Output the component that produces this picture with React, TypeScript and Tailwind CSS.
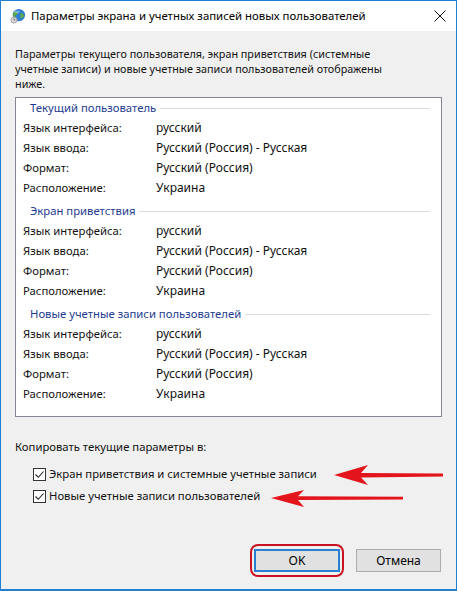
import React from "react";

type Row = { label: string; value: string };

const rows: Row[] = [
  { label: "Язык интерфейса:", value: "русский" },
  { label: "Язык ввода:", value: "Русский (Россия) - Русская" },
  { label: "Формат:", value: "Русский (Россия)" },
  { label: "Расположение:", value: "Украина" },
];

const groups = ["Текущий пользователь", "Экран приветствия", "Новые учетные записи пользователей"];

function GlobeIcon() {
  return (
    <svg width="16" height="16" viewBox="0 0 18 18" className="shrink-0">
      <circle cx="10" cy="8" r="7" fill="#2f7fd3" />
      <path d="M6 3.5c2 0 3 1.5 2.5 3s-2 1-2.5 2.5S5 11 4 10.5C3 8 3.5 5 6 3.5z" fill="#5fae3c" />
      <path d="M12 6c1.5-.5 3 .5 3.5 2s-1 3-2.5 3.5-1.5-1-1-2.5S10.5 6.5 12 6z" fill="#5fae3c" />
      <ellipse cx="8" cy="4.5" rx="3" ry="1.5" fill="#9fd0ff" opacity="0.6" />
      <circle cx="4.5" cy="13.5" r="3.5" fill="#d9d9d9" stroke="#8a8a8a" strokeWidth="0.8" />
      <path d="M4.5 11.5v2h1.5" stroke="#555" strokeWidth="0.8" fill="none" />
    </svg>
  );
}

function CheckBox() {
  return (
    <span className="w-[13px] h-[13px] border border-[#333333] bg-white flex items-center justify-center shrink-0">
      <svg width="11" height="11" viewBox="0 0 11 11">
        <path d="M1.5 5.5l2.8 2.8L9.5 2.5" stroke="#222" strokeWidth="1.1" fill="none" />
      </svg>
    </span>
  );
}

function Group({ title }: { title: string }) {
  return (
    <div className="mb-[3px]">
      <div className="h-[20px] flex items-center pl-[14px] pr-[11px]">
        <span className="text-[#1e3c8f] text-[11.3px] pr-[4px]">{title}</span>
        <span className="flex-1 h-px bg-[#d6dde3]" />
      </div>
      {rows.map((r) => (
        <div key={r.label} className="h-[20px] flex items-center pl-[7px]">
          <span className="w-[133px] text-[11.3px]">{r.label}</span>
          <span>{r.value}</span>
        </div>
      ))}
    </div>
  );
}

export default function App() {
  return (
    <div
      className="relative w-[457px] h-[591px] border border-[#1f7fd0] border-b-2 flex flex-col bg-[#f0f0f0] text-[12px] text-[#111] overflow-hidden"
      style={{ fontFamily: '"Noto Sans", "Open Sans", sans-serif' }}
    >
      {/* title bar */}
      <div className="h-[30px] bg-white flex items-center pl-[9px] pr-[9px] shrink-0">
        <GlobeIcon />
        <span className="ml-[5px] text-[11.4px] text-black">Параметры экрана и учетных записей новых пользователей</span>
        <svg width="12" height="12" viewBox="0 0 12 12" className="ml-auto mr-[1px]">
          <path d="M0.5 0.5l11 11M11.5 0.5l-11 11" stroke="#111" strokeWidth="1" />
        </svg>
      </div>

      <div className="flex-1 flex flex-col px-[14px] pt-[15px]">
        <p className="leading-[15px] text-[10.8px]">
          Параметры текущего пользователя, экран приветствия (системные
          <br />
          учетные записи) и новые учетные записи пользователей отображены
          <br />
          ниже.
        </p>

        <div className="mt-[6px] h-[320px] bg-white border border-[#828790]">
          {groups.map((g) => (
            <Group key={g} title={g} />
          ))}
        </div>

        <div className="mt-[22px] leading-[15px] text-[11.3px]">Копировать текущие параметры в:</div>
        <div className="mt-[14px] flex flex-col gap-[9px] pl-[18px] text-[11.3px]">
          <label className="flex items-center gap-[3px] h-[13px]">
            <CheckBox />
            <span>Экран приветствия и системные учетные записи</span>
          </label>
          <label className="flex items-center gap-[3px] h-[13px]">
            <CheckBox />
            <span>Новые учетные записи пользователей</span>
          </label>
        </div>

        <div className="mt-[41px] flex items-center justify-end pr-[1px]">
          <span className="border-2 border-[#c9111f] rounded-[8px] px-[2px] py-[3px] flex">
            <button className="w-[86px] h-[23px] bg-[#e1e1e1] border-2 border-[#2a7fd0] text-black">OK</button>
          </span>
          <button className="ml-[12px] w-[85px] h-[23px] bg-[#e1e1e1] border border-[#adadad] text-black">Отмена</button>
        </div>
      </div>

      {/* red annotation arrows */}
      <svg className="absolute left-0 top-0 pointer-events-none" width="457" height="591" viewBox="0 0 457 591">
        <polygon
          points="333,474 367,464 360,472 442,472.5 442,475.5 360,476.5 367,484"
          fill="#e3141c"
        />
        <polygon
          points="270,497 303,489 297,495.3 402,495.8 402,498.6 297,499 303,506"
          fill="#e3141c"
        />
      </svg>
    </div>
  );
}
